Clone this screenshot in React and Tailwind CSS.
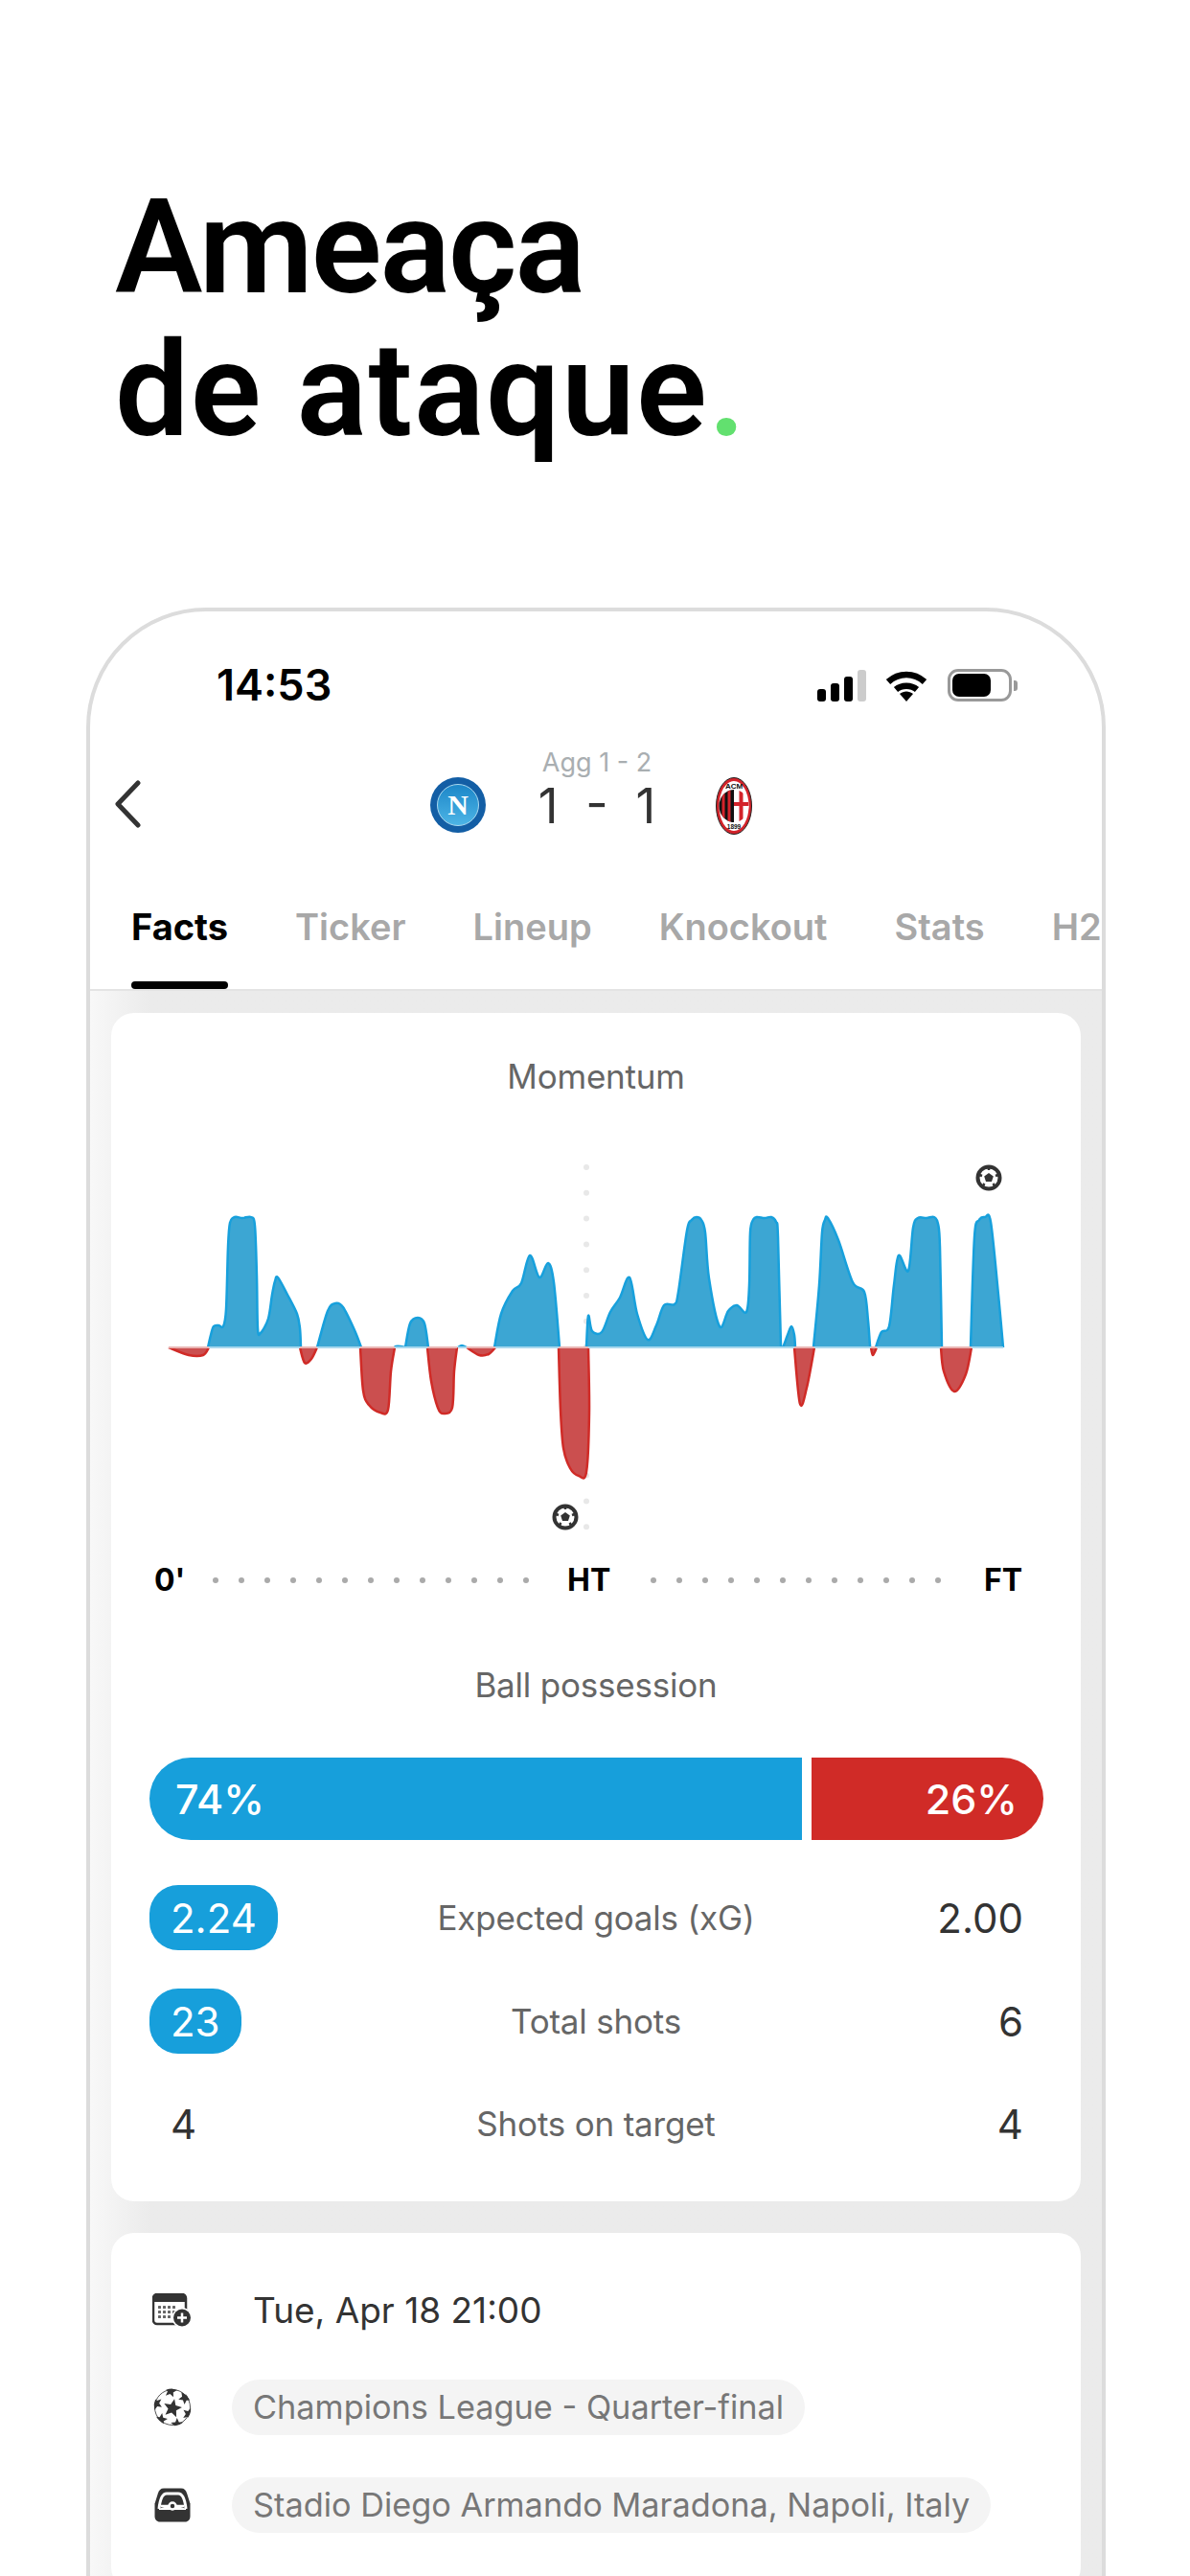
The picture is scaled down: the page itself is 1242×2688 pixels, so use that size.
import React from "react";

const BASE = 1405;

const blueAreas = [
  [[217,1405],[220,1392],[223,1383],[228,1382],[233,1383],[236,1365],[238,1300],[240,1275],[245,1269],[253,1270],[262,1269],[266,1278],[268,1330],[269,1385],[272,1390],[280,1375],[284,1350],[287,1336],[290,1332],[300,1350],[310,1370],[313,1385],[314,1405]],
  [[331,1405],[342,1367],[350,1359],[358,1363],[370,1387],[377,1405]],
  [[412,1405],[413,1404],[418,1404],[423,1405]],
  [[423,1405],[428,1380],[436,1374],[443,1380],[447,1405]],
  [[478,1405],[482,1403],[487,1405]],
  [[516,1405],[523,1370],[535,1346],[544,1338],[553,1309],[563,1332],[572,1317],[578,1337],[584,1405]],
  [[612,1405],[614,1372],[618,1388],[628,1389],[637,1368],[647,1353],[657,1332],[665,1370],[676,1397],[685,1382],[693,1361],[704,1360],[708,1347],[717,1283],[722,1272],[727,1269],[732,1272],[736,1285],[740,1333],[751,1383],[760,1367],[769,1361],[779,1368],[782,1340],[783,1285],[786,1272],[790,1269],[798,1270],[805,1269],[810,1274],[812,1290],[815,1403],[817,1405],[822,1392],[826,1383],[829,1392],[830,1405]],
  [[849,1405],[855,1340],[858,1285],[861,1272],[864,1270],[875,1293],[890,1337],[902,1347],[906,1377],[908,1403],[909,1405]],
  [[914,1405],[920,1389],[928,1383],[933,1340],[938,1309],[948,1325],[953,1280],[958,1270],[967,1270],[975,1269],[979,1276],[981,1300],[983,1405]],
  [[1013,1405],[1017,1290],[1022,1272],[1028,1269],[1034,1274],[1042,1350],[1047,1405]],
];

const redAreas = [
  [[176,1405],[197,1413],[212,1413],[218,1405]],
  [[313,1405],[318,1421],[325,1417],[331,1405]],
  [[376,1405],[379,1450],[385,1465],[397,1473],[405,1470],[408,1430],[412,1405]],
  [[446,1405],[450,1440],[457,1468],[463,1474],[472,1468],[474,1430],[477,1405]],
  [[487,1405],[500,1413],[510,1412],[517,1405]],
  [[583,1405],[585,1470],[588,1510],[595,1531],[604,1539],[612,1535],[615,1473],[614,1405]],
  [[829,1405],[835,1464],[842,1447],[850,1405]],
  [[909,1405],[911,1413],[915,1405]],
  [[982,1405],[985,1430],[996,1451],[1008,1433],[1014,1405]],
];

// catmull-rom through the traced points
const smooth = (pts) => {
  let d = `M${pts[0][0]} ${pts[0][1]}`;
  for (let i = 0; i < pts.length - 1; i++) {
    const p0 = pts[i - 1] || pts[i];
    const p1 = pts[i];
    const p2 = pts[i + 1];
    const p3 = pts[i + 2] || p2;
    const c1x = p1[0] + (p2[0] - p0[0]) / 6;
    const c1y = p1[1] + (p2[1] - p0[1]) / 6;
    const c2x = p2[0] - (p3[0] - p1[0]) / 6;
    const c2y = p2[1] - (p3[1] - p1[1]) / 6;
    d += `C${c1x} ${c1y} ${c2x} ${c2y} ${p2[0]} ${p2[1]}`;
  }
  return d;
};

const Ball = ({ x, y }) => (
  <g transform={`translate(${x} ${y})`}>
    <circle r="11.5" fill="#fff" stroke="#333" strokeWidth="4" />
    <polygon points="0,-5 4.8,-1.5 3,4 -3,4 -4.8,-1.5" fill="#333" />
    <path d="M0 -12V-8M11 -3.5L7 -2M-11 -3.5L-7 -2M7 9.5L4.5 6M-7 9.5L-4.5 6" stroke="#333" strokeWidth="2.5" />
  </g>
);

const MomentumChart = () => (
  <svg viewBox="116 1190 1012 430" className="block w-[1012px] h-[430px] mt-[48px]">
    {Array.from({ length: 15 }, (_, i) => (
      <circle key={i} cx="612" cy={1217 + i * 26.8} r="3" fill="#e8e8e8" />
    ))}
    <clipPath id="above">
      <rect x="115" y="1190" width="1013" height="215" />
    </clipPath>
    <clipPath id="below">
      <rect x="115" y="1405" width="1013" height="215" />
    </clipPath>
    <g clipPath="url(#above)">
      {blueAreas.map((pts, i) => (
        <path key={i} d={smooth(pts)} fill="#3ca6d3" stroke="#17a0dc" strokeWidth="2.5" strokeLinejoin="round" />
      ))}
    </g>
    <g clipPath="url(#below)">
      {redAreas.map((pts, i) => (
        <path key={i} d={smooth(pts)} fill="#cb4f4f" stroke="#d02b27" strokeWidth="2.5" strokeLinejoin="round" />
      ))}
    </g>
    {blueAreas.map((pts, i) => (
      <line key={i} x1={pts[0][0]} x2={pts[pts.length - 1][0]} y1={BASE} y2={BASE} stroke="#a8d8ee" strokeWidth="2" />
    ))}
    {redAreas.map((pts, i) => (
      <line key={i} x1={pts[0][0]} x2={pts[pts.length - 1][0]} y1={BASE} y2={BASE} stroke="#e9b4b2" strokeWidth="2" />
    ))}
    <Ball x={1032} y={1228} />
    <Ball x={590} y={1582} />
  </svg>
);

const SignalIcons = () => (
  <div className="flex items-end">
    <div className="flex items-end gap-[5px]">
      <div className="w-[9px] h-[13px] rounded-[3px] bg-black" />
      <div className="w-[9px] h-[19px] rounded-[3px] bg-black" />
      <div className="w-[9px] h-[26px] rounded-[3px] bg-black" />
      <div className="w-[9px] h-[33px] rounded-[3px] bg-[#cccccc]" />
    </div>
    <svg viewBox="0 0 44 33" className="w-[44px] h-[33px] ml-[20px]">
      <path d="M3 12.5C14 2.5 30 2.5 41 12.5" fill="none" stroke="#000" strokeWidth="6.5" />
      <path d="M11 20.5C17 15.5 27 15.5 33 20.5" fill="none" stroke="#000" strokeWidth="6.5" />
      <path d="M15 25C19 21.5 25 21.5 29 25L22 33Z" fill="#000" />
    </svg>
    <div className="relative ml-[21px] w-[67px] h-[34px] rounded-[11px] border-[3px] border-[#999999] p-[2px]">
      <div className="w-[40px] h-[24px] rounded-[7px] bg-black" />
      <div className="absolute right-[-9px] top-[9px] w-[4px] h-[11px] rounded-r-[3px] bg-[#999999]" />
    </div>
  </div>
);

const NapoliBadge = () => (
  <svg viewBox="0 0 58 58" className="w-[58px] h-[58px]">
    <defs>
      <linearGradient id="napoliInner" x1="0" y1="0" x2="0" y2="1">
        <stop offset="0" stopColor="#1c86c8" />
        <stop offset="1" stopColor="#4db5e6" />
      </linearGradient>
    </defs>
    <circle cx="29" cy="29" r="29" fill="#135ea5" />
    <circle cx="29" cy="29" r="21.5" fill="url(#napoliInner)" stroke="#a9d8ef" strokeWidth="1" />
    <text x="29" y="39" textAnchor="middle" fontSize="30" fontWeight="700" fill="#fff" fontFamily="'Liberation Serif', serif">N</text>
  </svg>
);

const MilanBadge = () => (
  <svg viewBox="0 0 38 60" className="w-[38px] h-[60px]">
    <clipPath id="milanInner">
      <ellipse cx="19" cy="30" rx="15.5" ry="17" />
    </clipPath>
    <ellipse cx="19" cy="30" rx="18.5" ry="29.5" fill="#d3232a" stroke="#222" strokeWidth="1" />
    <ellipse cx="19" cy="30" rx="15.5" ry="26" fill="#fff" />
    <g clipPath="url(#milanInner)">
      <rect x="3" y="13" width="16" height="34" fill="#111" />
      <rect x="6.5" y="13" width="3" height="34" fill="#d3232a" />
      <rect x="12.5" y="13" width="3" height="34" fill="#d3232a" />
      <rect x="19" y="13" width="16" height="34" fill="#fff" />
      <rect x="24.5" y="13" width="4" height="34" fill="#d3232a" />
      <rect x="19" y="26" width="16" height="4" fill="#d3232a" />
    </g>
    <text x="19" y="11.5" textAnchor="middle" fontSize="8" fontWeight="700" fill="#111" fontFamily="'Liberation Sans', sans-serif">ACM</text>
    <text x="19" y="54" textAnchor="middle" fontSize="6.5" fontWeight="700" fill="#111" fontFamily="'Liberation Sans', sans-serif">1899</text>
  </svg>
);

const CalendarIcon = () => (
  <svg viewBox="0 0 42 36" className="w-[42px] h-[36px]">
    <rect x="1" y="1" width="34" height="31" rx="4" fill="#fff" stroke="#333" strokeWidth="2.5" />
    <path d="M1 5a4 4 0 0 1 4-4h26a4 4 0 0 1 4 4v4H1Z" fill="#333" />
    {[6, 11, 16, 21].map((x) =>
      [13, 18, 23].map((y) => <rect key={`${x}-${y}`} x={x} y={y} width="3" height="3" rx="0.5" fill="#666" />)
    )}
    <circle cx="31" cy="25.5" r="10.5" fill="#fff" />
    <circle cx="31" cy="25.5" r="9" fill="#333" />
    <path d="M31 20.500v10M26 25.500h10" stroke="#fff" strokeWidth="2.5" />
  </svg>
);

const Star = ({ x, y, r, rot = 0 }) => {
  const pts = Array.from({ length: 10 }, (_, i) => {
    const rad = i % 2 ? r * 0.45 : r;
    const a = ((i * 36 + rot - 90) * Math.PI) / 180;
    return `${x + rad * Math.cos(a)},${y + rad * Math.sin(a)}`;
  }).join(" ");
  return <polygon points={pts} fill="#333" />;
};

const ChampionsIcon = () => (
  <svg viewBox="0 0 40 40" className="w-[40px] h-[40px]">
    <clipPath id="clBall">
      <circle cx="20" cy="20" r="19.500" />
    </clipPath>
    <circle cx="20" cy="20" r="18.500" fill="#fff" stroke="#555" strokeWidth="1" />
    <g clipPath="url(#clBall)">
      <Star x={20} y={21} r={10} rot={12} />
      <Star x={18} y={3} r={7} rot={10} />
      <Star x={33} y={10} r={7} rot={40} />
      <Star x={37} y={27} r={7} rot={20} />
      <Star x={25} y={38} r={7} rot={70} />
      <Star x={8} y={33} r={7} rot={10} />
      <Star x={3} y={16} r={7} rot={50} />
    </g>
  </svg>
);

const StadiumIcon = () => (
  <svg viewBox="0 0 38 36" className="w-[38px] h-[36px]">
    <path d="M10 0.500h18c3.500 0 5 2 6 5l3.500 11v13c0 3.500-2 6-5.500 6H6c-3.500 0-5.500-2.500-5.500-6V16.500L4 5.500c1-3 2.500-5 6-5Z" fill="#333" />
    <path d="M5 22C6 12 8 6 13 6H25C30 6 32 12 33 22" fill="none" stroke="#fff" strokeWidth="3" />
    <path d="M7 19H31" stroke="#fff" strokeWidth="2.5" />
    <path d="M5 22C12 18 26 18 33 22V23H5Z" fill="#fff" />
    <circle cx="19" cy="19" r="3.500" fill="#333" stroke="#fff" strokeWidth="2.500" />
  </svg>
);

const tabs = ["Ticker", "Lineup", "Knockout", "Stats", "H2H"];

const StatRow = ({ left, label, right, highlight, className }) => (
  <div className={`grid grid-cols-[1fr_auto_1fr] items-center h-[68px] mx-[40px] text-[42px] text-[#333333] ${className}`}>
    <div>
      {highlight ? (
        <span className="inline-flex items-center h-[68px] px-[22px] rounded-[30px] bg-[#179fdb] text-white">{left}</span>
      ) : (
        <span className="pl-[22px]">{left}</span>
      )}
    </div>
    <div className="text-[35px] text-[#666666] tracking-[-0.2px]">{label}</div>
    <div className="text-right pr-[20px]">{right}</div>
  </div>
);

const App = () => {
  return (
    <div className="h-[2688px] w-[1242px] overflow-hidden bg-white font-['Inter',sans-serif]">
      <h1 className="pt-[184px] pl-[120px] font-['Roboto',sans-serif] font-semibold text-[137px] leading-[149px] text-black">
        <span className="tracking-[-2px]">Ameaça</span>
        <br />
        <span className="tracking-[1.5px]">
          de ataque<span className="text-[#62e06f]">.</span>
        </span>
      </h1>

      <div className="mt-[152px] ml-[90px] w-[1064px] h-[2100px] overflow-hidden rounded-t-[125px] border-4 border-[#dcdcdc]">
        <div className="flex items-center justify-between h-[33px] mt-[60px] pl-[132px] pr-[94px]">
          <span className="text-[45px] font-semibold text-black">14:53</span>
          <SignalIcons />
        </div>

        <div className="relative h-[137px] mt-[50px]">
          <svg viewBox="0 0 28 50" className="absolute left-[25px] top-[33px] w-[28px] h-[50px]">
            <path d="M25 3L4 25L25 47" fill="none" stroke="#333333" strokeWidth="5" strokeLinecap="round" strokeLinejoin="round" />
          </svg>
          <div className="absolute left-[355px] top-[30px]">
            <NapoliBadge />
          </div>
          <div className="absolute left-[653px] top-[30px]">
            <MilanBadge />
          </div>
          <div className="flex flex-col items-center pl-[2px]">
            <span className="text-[27px] leading-[30px] text-[#a9aeb1]">Agg 1 - 2</span>
            <span className="text-[51px] leading-[56px] mt-[2px] text-[#333333] whitespace-pre">1  -  1</span>
          </div>
        </div>

        <div className="flex gap-[70px] h-[116px] pl-[43px] pt-[21px] border-b-2 border-[#e4e4e4] whitespace-nowrap text-[38px] font-semibold text-[#a8a8a8]">
          <div className="relative h-[93px] text-black font-bold">
            Facts
            <div className="absolute bottom-0 left-0 right-0 h-[8px] rounded-[4px] bg-black" />
          </div>
          {tabs.map((t) => (
            <span key={t}>{t}</span>
          ))}
        </div>

        <div className="h-[1700px] px-[22px] pt-[23px] bg-gradient-to-r from-[#f8f8f8] via-[#ebebeb] via-[6%] to-[#ebebeb]">
          <div className="bg-white rounded-[24px] h-[1240px] pt-[46px]">
            <div className="text-center text-[35px] leading-[40px] text-[#666666] tracking-[-0.2px]">Momentum</div>
            <MomentumChart />
            <div className="flex items-center h-[40px] mt-[8px] pl-[45px] text-[32px] font-bold text-black">
              <span className="w-[30px]">0'</span>
              <div className="flex gap-[21px] ml-[31px]">
                {Array.from({ length: 13 }, (_, i) => (
                  <div key={i} className="w-[6px] h-[6px] rounded-full bg-[#aaaaaa]" />
                ))}
              </div>
              <span className="ml-[40px] w-[46px]">HT</span>
              <div className="flex gap-[21px] ml-[41px]">
                {Array.from({ length: 12 }, (_, i) => (
                  <div key={i} className="w-[6px] h-[6px] rounded-full bg-[#aaaaaa]" />
                ))}
              </div>
              <span className="ml-[45px]">FT</span>
            </div>
            <div className="mt-[69px] text-center text-[35px] leading-[40px] text-[#666666] tracking-[-0.2px]">Ball possession</div>
            <div className="flex gap-[10px] h-[86px] ml-[40px] mr-[39px] mt-[56px] text-[43px] font-medium text-white">
              <div className="flex items-center w-[681px] pl-[27px] rounded-l-[43px] bg-[#179fdb]">74%</div>
              <div className="flex items-center justify-end flex-1 pr-[27px] rounded-r-[43px] bg-[#d02b27]">26%</div>
            </div>
            <StatRow left="2.24" label="Expected goals (xG)" right="2.00" highlight className="mt-[47px]" />
            <StatRow left="23" label="Total shots" right="6" highlight className="mt-[40px]" />
            <StatRow left="4" label="Shots on target" right="4" className="mt-[39px]" />
          </div>

          <div className="mt-[33px] bg-white rounded-[24px] pt-[52px] pb-[60px]">
            <div className="flex items-center h-[58px]">
              <div className="flex justify-center w-[126px] pl-[2px]">
                <CalendarIcon />
              </div>
              <span className="pl-[22px] text-[37px] text-[#333333]">Tue, Apr 18 21:00</span>
            </div>
            <div className="flex items-center h-[58px] mt-[43px]">
              <div className="flex justify-center w-[126px] pl-[2px]">
                <ChampionsIcon />
              </div>
              <span className="flex items-center h-[58px] px-[22px] rounded-[29px] bg-[#f4f4f4] text-[34.3px] text-[#777777]">Champions League - Quarter-final</span>
            </div>
            <div className="flex items-center h-[58px] mt-[44px]">
              <div className="flex justify-center w-[126px] pl-[2px]">
                <StadiumIcon />
              </div>
              <span className="flex items-center h-[58px] px-[22px] rounded-[29px] bg-[#f4f4f4] text-[34.3px] text-[#777777]">Stadio Diego Armando Maradona, Napoli, Italy</span>
            </div>
          </div>
        </div>
      </div>
    </div>
  );
};

export default App;
